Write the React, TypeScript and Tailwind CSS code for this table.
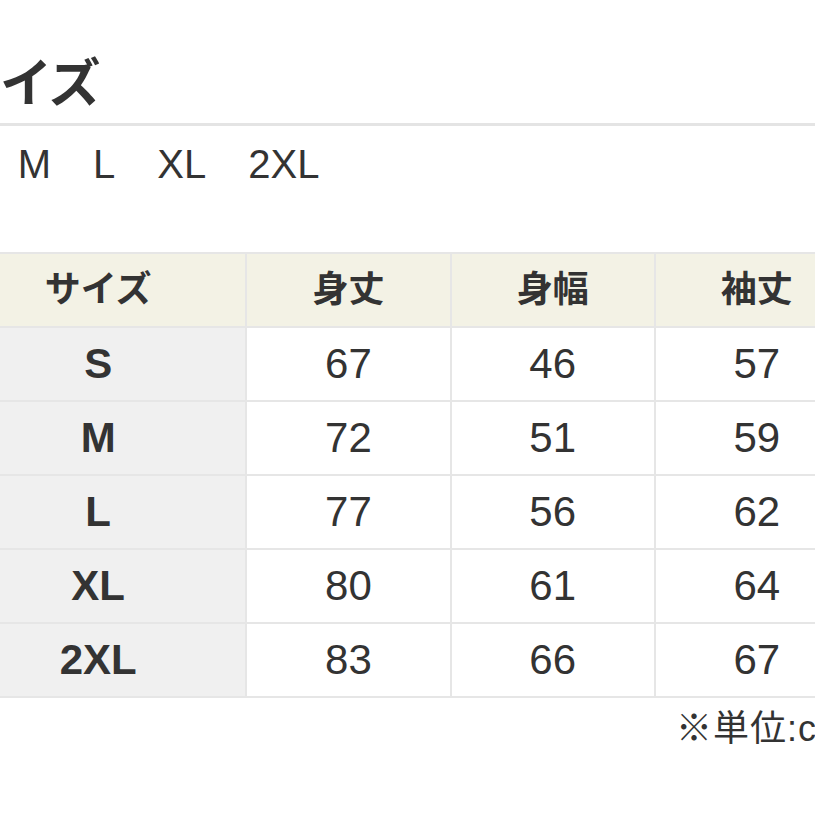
const sizes = ['S', 'M', 'L', 'XL', '2XL'];

const rows = [
  { size: 'S', length: 67, width: 46, sleeve: 57 },
  { size: 'M', length: 72, width: 51, sleeve: 59 },
  { size: 'L', length: 77, width: 56, sleeve: 62 },
  { size: 'XL', length: 80, width: 61, sleeve: 64 },
  { size: '2XL', length: 83, width: 66, sleeve: 67 },
];

const font = { fontFamily: '"Liberation Sans", "Noto Sans CJK JP", sans-serif' };

export default function App() {
  return (
    <div className="w-[815px] h-[815px] overflow-hidden bg-white text-[#333]" style={font}>
      <div className="w-[911px] ml-[-51px]">
        {/* Title */}
        <div className="pt-[51px] pl-[1px] pb-[6px] border-b-[3px] border-[#e4e4e4]">
          <h2 className="text-[52px] leading-[66px] font-bold tracking-[-2px]">サイズ</h2>
        </div>

        {/* Size list */}
        <div className="flex gap-[42px] pl-0 pt-[14px] text-[40px] leading-[48px] text-[#333]">
          {sizes.map((s) => (
            <span key={s}>{s}</span>
          ))}
        </div>

        {/* Table */}
        <table className="mt-[64px] border-collapse w-[911px] table-fixed">
          <colgroup>
            <col className="w-[296px]" />
            <col className="w-[204px]" />
            <col className="w-[204px]" />
            <col className="w-[204px]" />
          </colgroup>
          <thead>
            <tr className="h-[74px] bg-[#f3f2e5]">
              {['サイズ', '身丈', '身幅', '袖丈'].map((h) => (
                <th key={h} className="border-2 border-[#e6e6e6] text-[36px] font-bold leading-none">
                  {h}
                </th>
              ))}
            </tr>
          </thead>
          <tbody>
            {rows.map((r) => (
              <tr key={r.size} className="h-[74px]">
                <td className="border-2 border-[#e6e6e6] bg-[#f0f0f0] text-center text-[42px] font-bold leading-none">
                  {r.size}
                </td>
                <td className="border-2 border-[#e6e6e6] text-center text-[42px] leading-none">{r.length}</td>
                <td className="border-2 border-[#e6e6e6] text-center text-[42px] leading-none">{r.width}</td>
                <td className="border-2 border-[#e6e6e6] text-center text-[42px] leading-none">{r.sleeve}</td>
              </tr>
            ))}
          </tbody>
        </table>

        {/* Footer note */}
        <p className="mt-[8px] text-right text-[36px] leading-[46px] pr-[12px] tracking-[1px]">
          ※単位:cm
        </p>
      </div>
    </div>
  );
}
